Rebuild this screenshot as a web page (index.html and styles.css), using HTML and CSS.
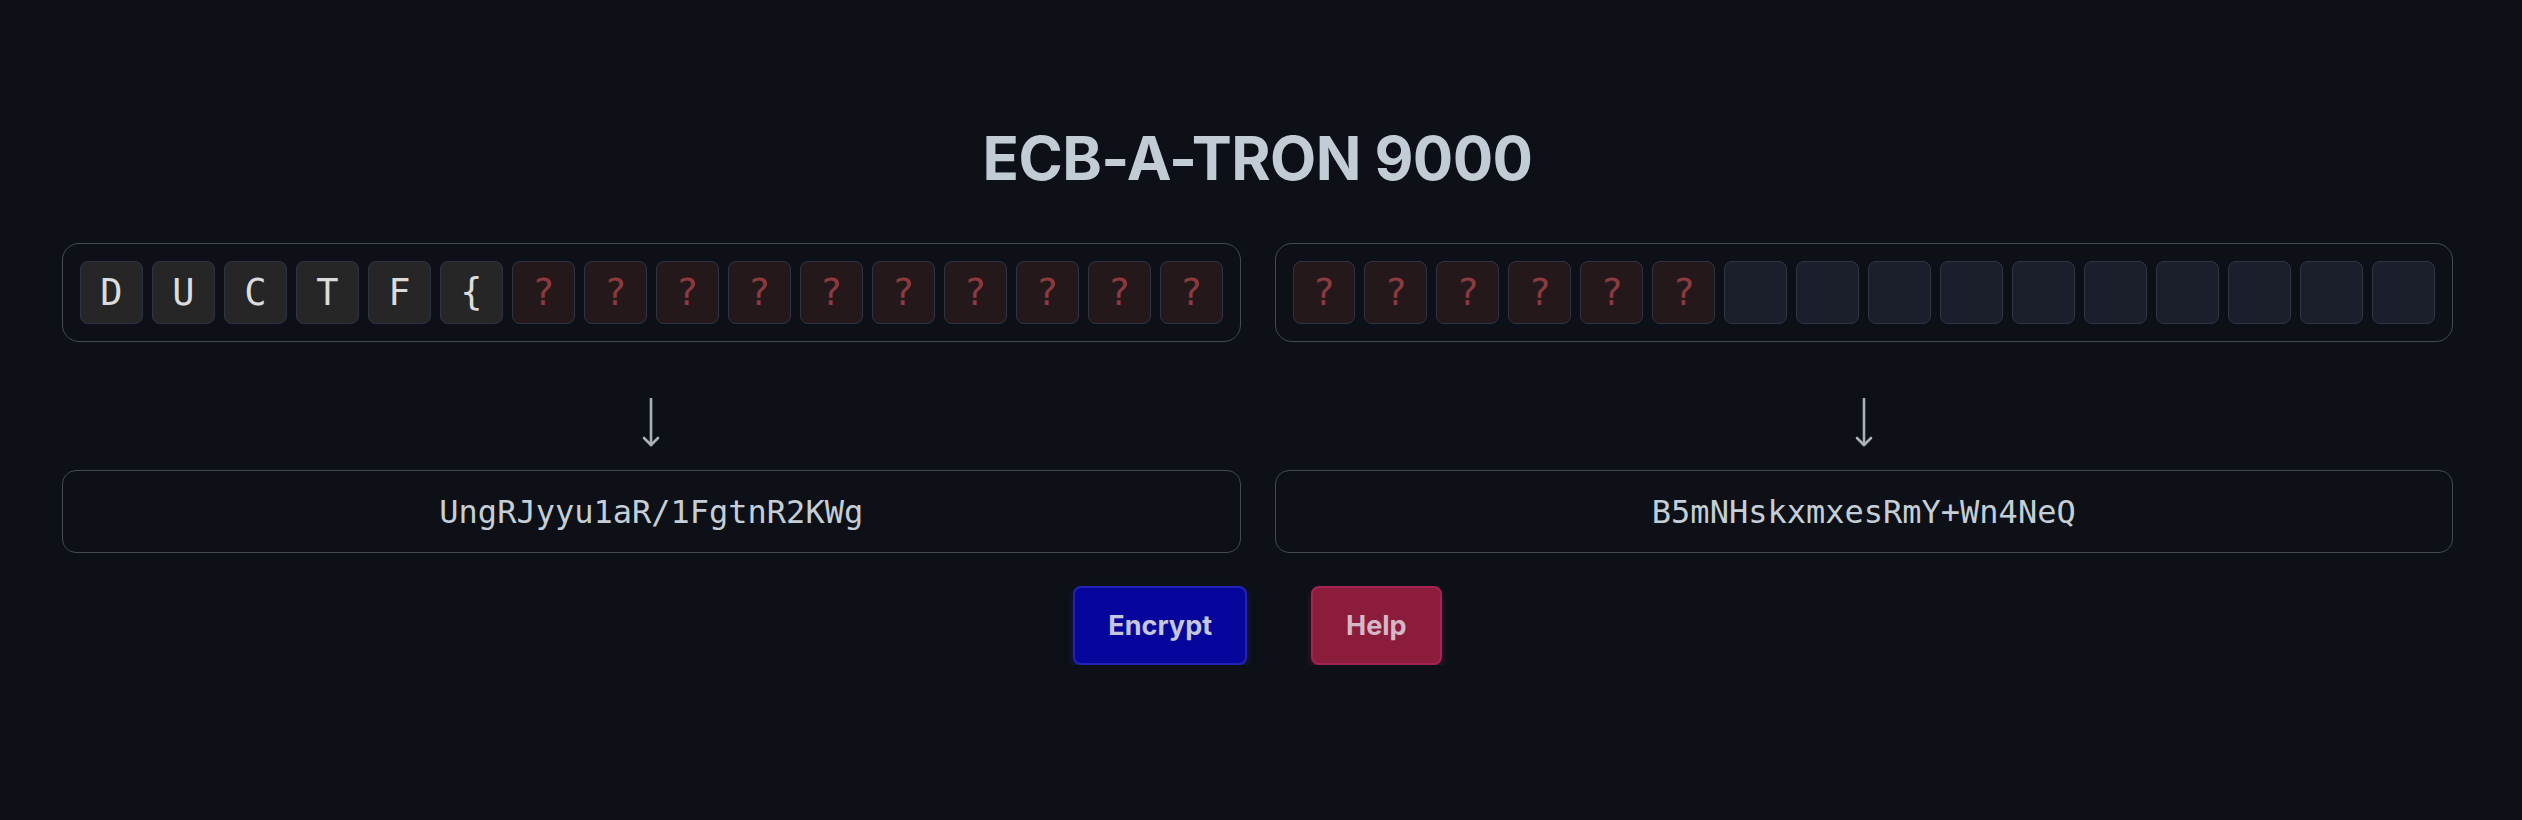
FILE: index.html
```html
<!DOCTYPE html>
<html lang="en">
<head>
<meta charset="utf-8">
<title>ECB-A-TRON 9000</title>
<link rel="stylesheet" href="styles.css">
</head>
<body>
<main class="page">
  <h1 class="title">ECB-A-TRON 9000</h1>
  <div class="grid">
    <div class="block">
      <div class="tile known">D</div>
      <div class="tile known">U</div>
      <div class="tile known">C</div>
      <div class="tile known">T</div>
      <div class="tile known">F</div>
      <div class="tile known">{</div>
      <div class="tile secret">?</div>
      <div class="tile secret">?</div>
      <div class="tile secret">?</div>
      <div class="tile secret">?</div>
      <div class="tile secret">?</div>
      <div class="tile secret">?</div>
      <div class="tile secret">?</div>
      <div class="tile secret">?</div>
      <div class="tile secret">?</div>
      <div class="tile secret">?</div>
    </div>
    <div class="block">
      <div class="tile secret">?</div>
      <div class="tile secret">?</div>
      <div class="tile secret">?</div>
      <div class="tile secret">?</div>
      <div class="tile secret">?</div>
      <div class="tile secret">?</div>
      <div class="tile empty"></div>
      <div class="tile empty"></div>
      <div class="tile empty"></div>
      <div class="tile empty"></div>
      <div class="tile empty"></div>
      <div class="tile empty"></div>
      <div class="tile empty"></div>
      <div class="tile empty"></div>
      <div class="tile empty"></div>
      <div class="tile empty"></div>
    </div>
    <div class="arrow">
      <svg class="arrow-icon" width="18" height="50" viewBox="0 0 18 50" aria-label="↓">
        <line x1="9" y1="1" x2="9" y2="47" />
        <polyline points="2,40 9,47 16,40" />
      </svg>
    </div>
    <div class="arrow">
      <svg class="arrow-icon" width="18" height="50" viewBox="0 0 18 50" aria-label="↓">
        <line x1="9" y1="1" x2="9" y2="47" />
        <polyline points="2,40 9,47 16,40" />
      </svg>
    </div>
    <div class="output">UngRJyyu1aR/1FgtnR2KWg</div>
    <div class="output">B5mNHskxmxesRmY+Wn4NeQ</div>
  </div>
  <div class="actions">
    <button class="btn btn-encrypt">Encrypt</button>
    <button class="btn btn-help">Help</button>
  </div>
</main>
</body>
</html>
```
FILE: styles.css
```css
html, body {
  margin: 0;
  padding: 0;
  background: #0d1117;
}

body {
  font-family: Inter, "Liberation Sans", sans-serif;
  color: #c3ccd4;
}

.page {
  width: 2391px;
  margin-left: 62px;
  padding-top: 122px;
}

.title {
  margin: 0;
  text-align: center;
  font-family: Inter, "Liberation Sans", sans-serif;
  font-weight: 700;
  font-size: 60px;
  line-height: 72px;
  letter-spacing: -0.6px;
  color: #c2ccd4;
}

.grid {
  display: grid;
  grid-template-columns: 1fr 1fr;
  column-gap: 34px;
  margin-top: 49px;
}

.block {
  display: flex;
  gap: 9px;
  padding: 17px;
  border: 1px solid #434a54;
  border-radius: 17px;
}

.tile {
  flex: 1;
  height: 61px;
  border: 1px solid #2d3545;
  border-radius: 8px;
  display: flex;
  align-items: center;
  justify-content: center;
  font-family: "DejaVu Sans Mono", "Liberation Mono", monospace;
  font-size: 37px;
}

.known {
  background: #262626;
  color: #dcdcdc;
}

.secret {
  background: #25181b;
  color: #8c3a3e;
}

.empty {
  background: #1a1f2b;
}

.arrow {
  display: flex;
  justify-content: center;
  align-items: flex-start;
  height: 128px;
  padding-top: 56px;
  box-sizing: border-box;
}

.arrow-icon {
  display: block;
  fill: none;
  stroke: #a9b1b9;
  stroke-width: 2.6;
  stroke-linecap: round;
  stroke-linejoin: round;
}

.output {
  height: 81px;
  border: 1px solid #434a54;
  border-radius: 14px;
  display: flex;
  align-items: center;
  justify-content: center;
  font-family: "DejaVu Sans Mono", "Liberation Mono", monospace;
  font-size: 32px;
  color: #c5ced6;
}

.actions {
  display: flex;
  justify-content: center;
  gap: 64px;
  margin-top: 33px;
}

.btn {
  font-family: Inter, "Liberation Sans", sans-serif;
  font-weight: 700;
  font-size: 27px;
  height: 79px;
  padding: 0 33px;
  border-radius: 8px;
  cursor: pointer;
}

.btn-encrypt {
  background: #06069c;
  border: 2px solid #2424b4;
  color: #c6c6de;
  box-shadow: 0 5px 7px rgba(40, 40, 200, 0.35);
}

.btn-help {
  background: #8b1c3c;
  border: 2px solid #a62454;
  color: #d6b7c7;
  box-shadow: 0 5px 7px rgba(170, 30, 80, 0.35);
}
```
